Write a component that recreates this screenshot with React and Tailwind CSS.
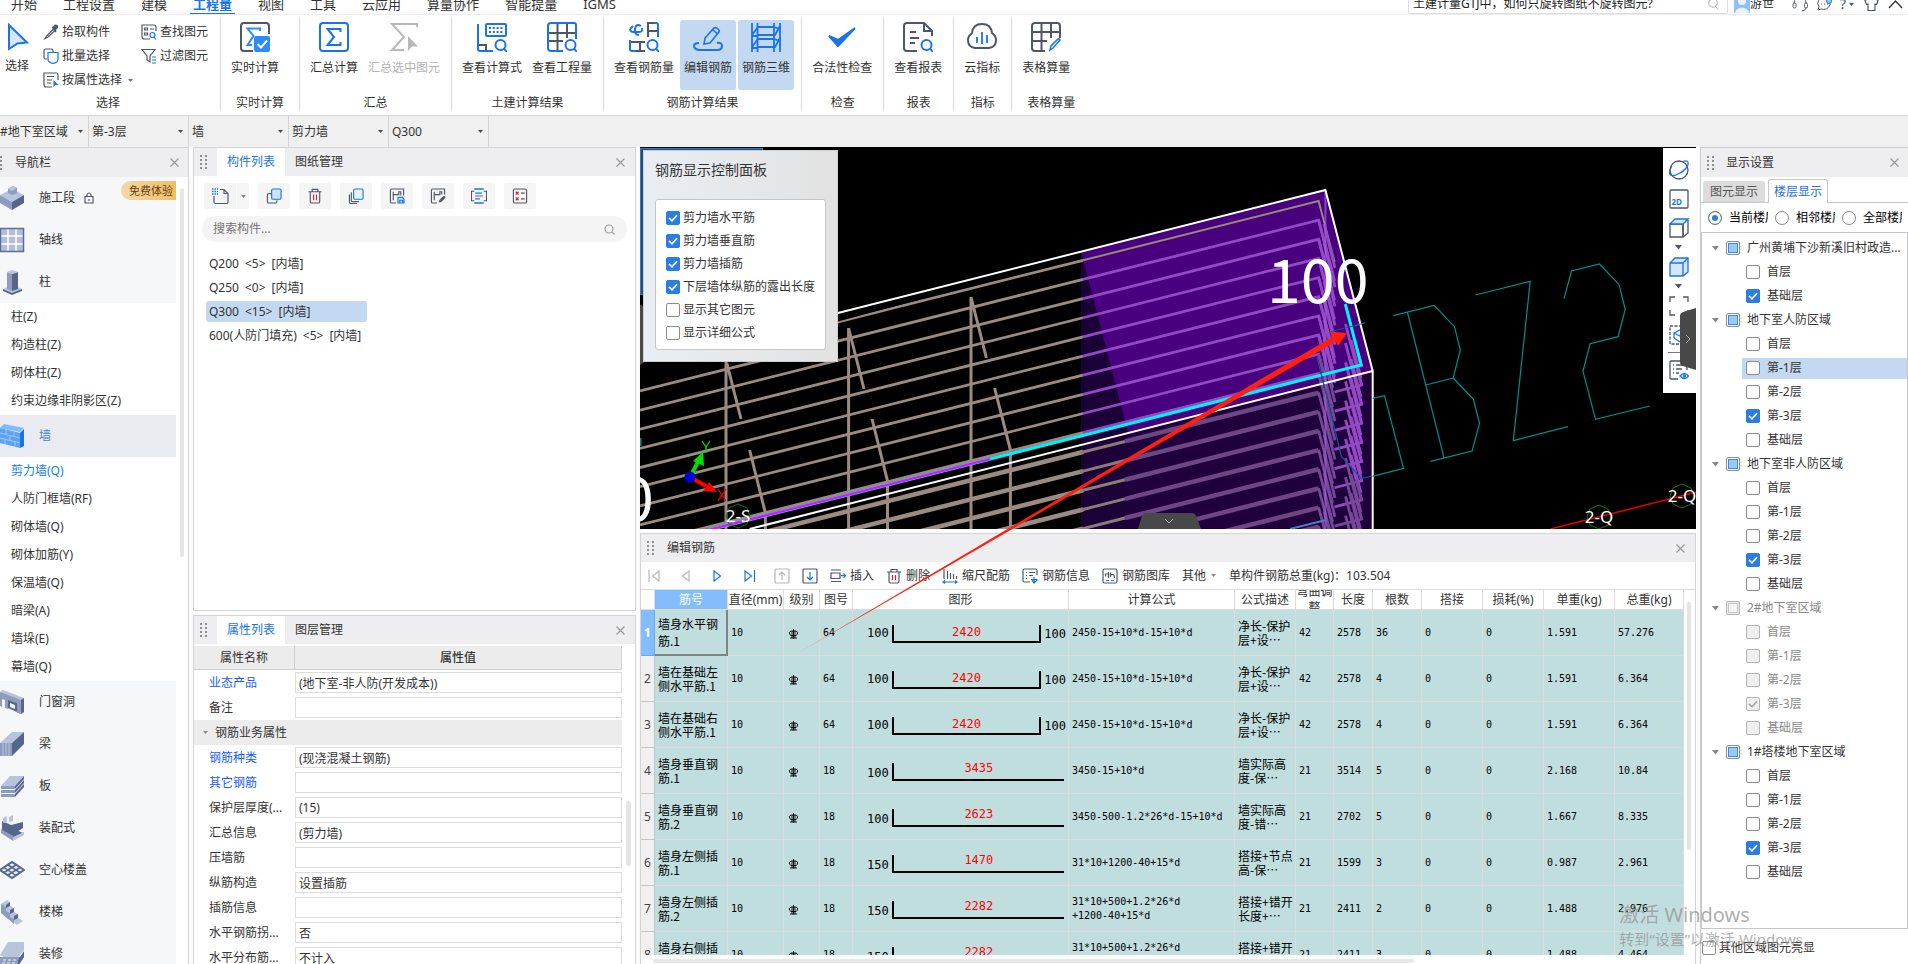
import React from "react";

const INK = "#4f5668";
const BLUE = "#1a73e8";

/* ---------- small shared pieces ---------- */

function Caret({ className = "" }) {
  return (
    <svg width="7" height="5" viewBox="0 0 7 5" className={"shrink-0 " + className} aria-hidden="true">
      <path d="M0 0h7L3.500 4.500z" fill="currentColor" />
    </svg>
  );
}

function Grip() {
  return (
    <svg width="7" height="14" viewBox="0 0 7 14" className="shrink-0" aria-hidden="true">
      {[0, 4, 8, 12].map((y) => (
        <g key={y} fill="#8f8f8f">
          <rect x="0" y={y} width="2" height="2" />
          <rect x="5" y={y} width="2" height="2" />
        </g>
      ))}
    </svg>
  );
}

function CloseButton({ label }) {
  return (
    <button type="button" aria-label={label} className="grid size-4 shrink-0 place-items-center text-[#9a9a9a]">
      <svg width="9" height="9" viewBox="0 0 9 9" aria-hidden="true">
        <path d="M.5.5l8 8M8.500.5l-8 8" stroke="currentColor" strokeWidth="1.200" />
      </svg>
    </button>
  );
}

function Check({ label, checked, partial, disabled, className = "", gap = "gap-[3px]" }) {
  const box = disabled
    ? "border-[#b4b4b4] bg-[#efefef]"
    : checked
      ? "border-[#2b7de1] bg-[#2b7de1]"
      : "border-[#8c8c8c] bg-white";
  return (
    <label className={"flex min-w-0 items-center " + gap + " " + className}>
      <span className="grid shrink-0">
        <input
          type="checkbox"
          defaultChecked={checked}
          disabled={disabled}
          className={"col-start-1 row-start-1 size-[14px] appearance-none rounded-[2px] border " + box}
        />
        {checked && (
          <svg width="14" height="14" viewBox="0 0 14 14" className="pointer-events-none col-start-1 row-start-1" aria-hidden="true">
            <path d="M3 6.800l3 3 5-5.600" fill="none" stroke={disabled ? "#a8a8a8" : "#fff"} strokeWidth="1.700" />
          </svg>
        )}
        {partial && (
          <span
            className={
              "pointer-events-none col-start-1 row-start-1 m-[2px] size-[10px] border " +
              (disabled ? "border-[#c4c4c4] bg-[#f4f4f4]" : "border-[#2b8cf5] bg-[#9cc9fb]")
            }
          />
        )}
      </span>
      <span className="truncate">{label}</span>
    </label>
  );
}

/* ---------- top menu ---------- */

const MENU = ["开始", "工程设置", "建模", "工程量", "视图", "工具", "云应用", "算量协作", "智能提量", "IGMS"];

function TopBar() {
  return (
    <header className="h-[15px] shrink-0 overflow-hidden border-b border-[#ececec] bg-white">
      <div className="-mt-[7px] flex h-[22px] items-center justify-between">
        <nav className="flex pl-px text-[13px] leading-[22px]">
          {MENU.map((m) => (
            <a key={m} href="#" className="relative mr-[6px] px-[10px] whitespace-nowrap">
              {m === "工程量" ? (
                <>
                  <span className="font-bold text-[#1a73e8]">{m}</span>
                  <span className="absolute inset-x-[7px] bottom-0 h-[2px] bg-[#1a73e8]" />
                </>
              ) : (
                m
              )}
            </a>
          ))}
        </nav>
        <div className="flex items-center pr-[5px] text-[#4f5668]">
          <label className="mr-[6px] flex h-5 w-[320px] items-center rounded-[2px] border border-[#dedede] px-1">
            <input
              aria-label="搜索帮助"
              defaultValue="土建计量GTJ中，如何只旋转图纸不旋转图元?"
              className="min-w-0 flex-1 text-[12px] text-[#222] outline-none"
            />
            <svg width="11" height="12" viewBox="0 0 11 12" className="mr-1" aria-hidden="true">
              <circle cx="5" cy="5" r="4.200" fill="none" stroke="#aaa" />
              <path d="M7.500 8.500l2.500 3" stroke="#aaa" />
            </svg>
          </label>
          <svg width="16" height="18" viewBox="0 0 16 18" aria-hidden="true">
            <rect width="16" height="18" fill="#8fc1f7" />
            <circle cx="8" cy="6" r="4" fill="#eaf4ff" />
            <path d="M1 18c1-7 13-7 14 0z" fill="#eaf4ff" />
          </svg>
          <span className="mr-[18px] text-[12px] text-[#222]">游世</span>
          <svg width="17" height="16" viewBox="0 0 17 16" fill="none" stroke="currentColor" aria-hidden="true">
            <path d="M2 7a6 6 0 0 1 12 0" />
            <rect x="1" y="7" width="3" height="5" rx="1.500" />
            <rect x="12.500" y="7" width="3" height="5" rx="1.500" />
            <path d="M14 12q-1 3-4 3" />
          </svg>
          <svg width="16" height="16" viewBox="0 0 16 16" className="ml-[7px]" fill="none" stroke="currentColor" aria-hidden="true">
            <path d="M8 1.500a6.500 6 0 1 1-3 11.500l-3 1 1-3A6 6 0 0 1 8 1.500z" />
            <path d="M5 8h1M8 8h1M11 8h1" />
            <circle cx="13" cy="5" r="2.500" fill="#9cc9fb" stroke="#1a73e8" />
          </svg>
          <span className="ml-2 text-[14px]">?</span>
          <Caret className="ml-[2px] scale-75" />
          <svg width="15" height="16" viewBox="0 0 15 16" className="ml-[9px]" fill="none" stroke="currentColor" strokeWidth="1.200" aria-hidden="true">
            <path d="M5 2L1 4.500l1.500 4 1.500-.5v6.500h7V8l1.500.5 1.500-4L10 2q-2.500 2.500-5 0z" />
          </svg>
          <svg width="15" height="10" viewBox="0 0 15 10" className="ml-[9px]" fill="none" stroke="#333" strokeWidth="1.300" aria-hidden="true">
            <path d="M1 9l6.500-7L14 9" />
          </svg>
        </div>
      </div>
    </header>
  );
}

/* ---------- ribbon ---------- */

function Ico({ children, size = 30 }) {
  return (
    <svg width={size} height={size} viewBox="0 0 30 30" fill="none" strokeWidth="2" stroke={INK} className="shrink-0" aria-hidden="true">
      {children}
    </svg>
  );
}

const magnifier = (
  <g stroke={BLUE}>
    <ellipse cx="23.500" cy="23" rx="5" ry="5" fill="#fff" />
    <path d="M27 26.500l3 3.500" />
  </g>
);

const ICONS = {
  realtime: (
    <Ico>
      <path d="M29 12V4q0-3-3-3H4Q1 1 1 4v22q0 3 3 3h9" />
      <path d="M20 9V6.500H7.500L13.500 14l-6 9H12" stroke="#2e8bff" />
      <rect x="14" y="14" width="16" height="16" rx="2" fill="#2e8bff" stroke="none" />
      <path d="M17.500 22l3.500 3.500 6-7" stroke="#fff" />
    </Ico>
  ),
  sigma: (
    <Ico>
      <rect x="1" y="1" width="28" height="28" rx="3" stroke={BLUE} />
      <path d="M21.500 10V7H8.500l6.500 8-6.500 8h13v-3" stroke={BLUE} />
    </Ico>
  ),
  sigmaPick: (
    <Ico>
      <path d="M28 5V2H3l12 13L3 28h12" stroke="#b9b9b9" />
      <path d="M19 14v15l4-4.500h6z" fill="#b9b9b9" stroke="none" />
    </Ico>
  ),
  viewFormula: (
    <Ico>
      <rect x="9" y="2" width="20" height="12" rx="1" stroke={BLUE} />
      <path d="M12 6h15M12 10h15" stroke={BLUE} strokeDasharray="2 1.800" />
      <path d="M1 2v25q0 2 2 2h13" stroke={BLUE} />
      <path d="M2 23h7v6" />
      {magnifier}
    </Ico>
  ),
  viewQty: (
    <Ico>
      <path d="M2 11h26M2 19h14M10.500 2v26M20 2v14" />
      <path d="M16 29H4q-3 0-3-3V4q0-3 3-3h23q2 0 2 2v14" stroke={BLUE} />
      {magnifier}
    </Ico>
  ),
  viewRebar: (
    <Ico>
      <path d="M12 4Q7 1 6 7t4 6M1 7q0 3 4 3h5q4 0 3-4M1 7l3-3" stroke={BLUE} />
      <path d="M19 15V1h7M19 9h9" />
      <path d="M25 1h2q2 0 2 2v12" stroke={BLUE} />
      <path d="M1 18v9q0 2 2 2h4" stroke={BLUE} />
      <path d="M2 20h14M11 20v9M7 29h9" />
      {magnifier}
    </Ico>
  ),
  editRebar: (
    <Ico>
      <path d="M6 21q-5 0-5 3t5 4h18q5 0 5-4t-5-3" stroke={BLUE} />
      <path d="M11 22l1-6L21 6q2-1 4 1t1 3L17 21zM20 8l4 3.500" stroke={BLUE} strokeWidth="1.600" />
    </Ico>
  ),
  rebar3d: (
    <Ico>
      <g stroke={BLUE} strokeWidth="1.800">
        <path d="M1 1v29M6.500 1v29M23 1v29M29 1v29" />
        <path d="M1 13L7 5h16M6.500 13H24l5-9M1 25l6-8h17M6.500 25H24l5-9M23 5l6 2M23 17l6 2M1 14h5M1 26h5" />
      </g>
    </Ico>
  ),
  tick: (
    <Ico>
      <path d="M2 14l9 10L28 6 11 18z" fill={BLUE} stroke={BLUE} />
    </Ico>
  ),
  report: (
    <Ico>
      <path d="M14 29H4q-3 0-3-3V4q0-3 3-3h17l8 8v5M21 1v8h8" />
      <path d="M7 10h6M7 16h9M7 21h5" />
      {magnifier}
    </Ico>
  ),
  cloud: (
    <Ico>
      <path d="M8 26q-7-1-7-8 0-4 4-7 1-9 10-9t10 9q4 3 4 7 0 7-7 8z" />
      <path d="M10 15v6M15 10v12M20 13v8" stroke={BLUE} strokeWidth="1.800" />
    </Ico>
  ),
  tableQty: (
    <Ico>
      <path d="M14 29H4q-3 0-3-3V4q0-3 3-3h22q3 0 3 3v12M1 10h28M1 19h15M10.500 1v27M20 1v15" />
      <path d="M19 28l1-4 7-7q1.500-.5 2 1l-7 8z" stroke={BLUE} strokeWidth="1.500" fill="#fff" />
    </Ico>
  ),
};

const GROUPS = [
  { name: "实时计算", wide: true, items: [["实时计算", "realtime"]] },
  { name: "汇总", items: [["汇总计算", "sigma"], ["汇总选中图元", "sigmaPick", "off"]] },
  { name: "土建计算结果", items: [["查看计算式", "viewFormula"], ["查看工程量", "viewQty"]] },
  { name: "钢筋计算结果", items: [["查看钢筋量", "viewRebar"], ["编辑钢筋", "editRebar", "on"], ["钢筋三维", "rebar3d", "on"]] },
  { name: "检查", items: [["合法性检查", "tick"]] },
  { name: "报表", items: [["查看报表", "report"]] },
  { name: "指标", items: [["云指标", "cloud"]] },
  { name: "表格算量", wide: true, items: [["表格算量", "tableQty"]] },
];

function SmallTool({ label, caret, children }) {
  return (
    <button type="button" className="flex h-6 shrink-0 items-center gap-[3px] whitespace-nowrap">
      <svg width="16" height="16" viewBox="0 0 16 16" fill="none" stroke={INK} strokeWidth="1.200" aria-hidden="true">
        {children}
      </svg>
      <span>{label}</span>
      {caret && <Caret className="ml-[2px] scale-75 text-[#777]" />}
    </button>
  );
}

function Ribbon() {
  return (
    <div className="flex h-[101px] shrink-0 border-b border-[#d4d4d4] bg-white">
      <section className="flex w-[220px] flex-col pt-[5px]">
        <div className="flex h-[70px] shrink-0">
          <button type="button" className="flex w-[34px] shrink-0 flex-col items-center pt-[3px]">
            <svg width="22" height="28" viewBox="0 0 22 28" className="mb-[7px] ml-[2px] shrink-0" aria-hidden="true">
              <path d="M2 2l18 17.500-9.500 1L2 26z" fill="#d5e6fb" stroke={BLUE} strokeWidth="2" />
            </svg>
            选择
          </button>
          <div className="flex w-[107px] flex-col pl-[9px]">
            <SmallTool label="拾取构件">
              <path d="M9 3l4 4M10 4q2-4 4-2.500t-2 4.500l1 2-3-3z" fill={INK} />
              <path d="M10 5.500L3.500 12l-1.500 2.500L5 13l6.500-6" />
            </SmallTool>
            <SmallTool label="批量选择">
              <path d="M4 11H2.500Q1 11 1 9.500v-7Q1 1 2.500 1h6Q10 1 10 2.500V4" />
              <path d="M5 4.500h10v7q0 3-5 4-5-1-5-4z" stroke={BLUE} />
            </SmallTool>
            <SmallTool label="按属性选择" caret>
              <path d="M9 15H3q-2 0-2-2V1h12q2 0 2 2v5M4 4.500h7M4 8h5M4 11h4" />
              <path d="M10.500 8v7l2-2h3z" fill={BLUE} stroke="none" />
            </SmallTool>
          </div>
          <div className="flex flex-col">
            <SmallTool label="查找图元">
              <path d="M9 15H3q-2 0-2-2V1h12q2 0 2 2v4M3.500 4h3v2h-3zM9 5h4M3.500 9h3v2h-3z" />
              <circle cx="11.500" cy="11" r="2.500" stroke={BLUE} />
              <path d="M13 13l2 2.500" stroke={BLUE} />
            </SmallTool>
            <SmallTool label="过滤图元">
              <path d="M1 1.500h13L9 8v6l-3-2V8z" />
              <path d="M11 9h4M11 12h4M11 15h4" stroke={BLUE} />
            </SmallTool>
          </div>
        </div>
        <h2 className="pr-1 text-center leading-[26px]">选择</h2>
      </section>
      {GROUPS.map((g) => (
        <React.Fragment key={g.name}>
          <div className="mt-[2px] h-[94px] w-px bg-[#d9d9d9]" />
          <section className="flex flex-col pt-[5px]">
            <div className={"flex h-[70px] shrink-0 gap-[2px] pl-[6px] " + (g.wide ? "pr-4" : "pr-[7px]")}>
              {g.items.map(([label, icon, state]) => (
                <button
                  key={label}
                  type="button"
                  disabled={state === "off"}
                  className={
                    "flex flex-col items-center gap-2 rounded-[3px] px-1 pt-[2px] leading-4 whitespace-nowrap " +
                    (state === "on" ? "bg-[#c2d9f1]" : state === "off" ? "text-[#b3b3b3]" : "")
                  }
                >
                  {ICONS[icon]}
                  {label}
                </button>
              ))}
            </div>
            <h2 className="text-center leading-[26px]">{g.name}</h2>
          </section>
        </React.Fragment>
      ))}
    </div>
  );
}

const SELECTS = [
  ["区域", "#地下室区域", "w-[89px]", "pl-0"],
  ["楼层", "第-3层", "w-[100px]", "pl-[3px]"],
  ["构件类型", "墙", "w-[100px]", "pl-[3px]"],
  ["构件子类型", "剪力墙", "w-[100px]", "pl-[3px]"],
  ["构件", "Q300", "w-[100px]", "pl-[3px]"],
];

function SelectBar() {
  return (
    <div className="flex h-[31px] shrink-0 bg-[#f0f0f0]">
      {SELECTS.map(([name, value, w, pad]) => (
        <div key={name} className={"grid items-center border-r border-[#d4d4d4] " + w}>
          <select aria-label={name} className={"col-start-1 row-start-1 h-full w-full appearance-none bg-transparent " + pad}>
            <option>{value}</option>
          </select>
          <Caret className="pointer-events-none col-start-1 row-start-1 mr-[4px] scale-75 justify-self-end text-[#4a4a4a]" />
        </div>
      ))}
    </div>
  );
}

/* ---------- navigation ---------- */

const L = "#b9c4dc";
const M = "#8e9cbe";
const D = "#55658c";

const NAV_ICONS = {
  施工段: (
    <>
      <path d="M0 10l12-6 12 6-12 7z" fill={L} />
      <path d="M0 10l12 7v8L0 18z" fill={M} />
      <path d="M24 10l-12 7v8l12-7z" fill={D} />
      <path d="M8 4l5-3 4 2v5l-5 2-4-2z" fill={M} />
      <path d="M8 4l5-3 4 2-5 3z" fill={L} />
    </>
  ),
  轴线: (
    <>
      <path d="M0 1h24v24H0z" fill="#b4bfd6" />
      <path d="M8 1v24M16 1v24M0 9h24M0 17h24" stroke="#fff" strokeWidth="1.500" />
      <path d="M.5 1.500h23v23H.5z" fill="none" stroke="#5b6c95" strokeWidth="1.500" />
    </>
  ),
  柱: (
    <>
      <path d="M3 20l9-4 10 4-10 5z" fill={L} />
      <path d="M3 20l9 4v2l-9-4zM22 20l-10 4v2l10-4z" fill={D} />
      <path d="M7 3l5 2v17l-5-2z" fill={M} />
      <path d="M18 3l-6 2v17l6-2z" fill={D} />
      <path d="M7 3l5-2 6 2-6 2z" fill={L} />
    </>
  ),
  墙: (
    <>
      <path d="M0 5l4-4 20 4-4 4z" fill="#7fbcff" />
      <path d="M0 5l20 5v15L0 20z" fill="#5aa2f7" />
      <path d="M24 6l-4 4v15l4-2z" fill="#1a73e8" />
      <path d="M0 10l20 5M0 15l20 5M6 6.500v5M14 8.500v5M10 12.500v5M5 16.500v5M15 19v4" stroke="#9fcaff" />
    </>
  ),
  门窗洞: (
    <>
      <path d="M0 3l3-2 21 8v13l-3 2z" fill={L} />
      <path d="M0 3l21 8v14l-4-1V14l-9-3v9l-3-1v-8l-3-1v8l-2-1z" fill={M} />
      <path d="M8 11l9 3v9l-9-4z" fill={D} />
      <path d="M10 14l5 2v4l-5-2z" fill="#eef1f7" />
      <path d="M24 9l-3 2v14l3-2z" fill={D} />
    </>
  ),
  梁: (
    <>
      <path d="M0 12L12 1h12L12 12z" fill={L} />
      <path d="M0 12h12v13H0z" fill={M} />
      <path d="M12 12L24 1v12L12 25z" fill={D} />
      <path d="M3 12v13M6 12v13M9 12v13" stroke={L} />
    </>
  ),
  板: (
    <>
      <path d="M1 13L10 3h14l-9 10z" fill={L} />
      <path d="M1 13h14v3H1zM1 17h14v3H1zM1 21h14v3H1z" fill={M} />
      <path d="M15 13l9-10v3l-9 10zM15 17l9-10v3l-9 10zM15 21l9-10v3l-9 10z" fill={D} />
    </>
  ),
  装配式: (
    <>
      <path d="M1 14l6-3 16 7-9 6z" fill={D} />
      <path d="M2 6l9 4 12-3v6l-9 6L2 13z" fill={D} />
      <path d="M1 14l12 7v5L1 18z" fill={M} />
      <path d="M24 17l-11 5v4l11-6z" fill={L} />
      <path d="M3 3l4-2v6L3 8zM9 2l4-2v6L9 7z" fill={L} />
    </>
  ),
  空心楼盖: (
    <>
      <path d="M0 13L12 5l12 8-12 8z" fill="#e6eaf3" stroke={D} strokeWidth="2" />
      <path d="M4 10.500l12 8M8 8l12 7.500M4 15.500L16 8M8 18l12-7.500" stroke={D} strokeWidth="1.500" />
    </>
  ),
  楼梯: (
    <>
      <path d="M1 5l6-4 3 2v4l4 2v4l4 2v4l5 3-6 4L1 14z" fill={L} />
      <path d="M6 6l4-3v4l-4 2zM10 11l4-2v4l-4 2zM14 17l4-2v4l-4 2z" fill={D} />
      <path d="M1 5l5 3v4l4 2v4l4 2v5L1 14z" fill={M} />
    </>
  ),
  装修: (
    <>
      <path d="M0 14L8 1h16v8L14 22z" fill={L} />
      <path d="M0 16h24l-6 9H0z" fill={M} />
      <path d="M24 10v6l-6 9v-6z" fill={D} />
      <path d="M3 19h14M2 22h14" stroke="#eef1f7" strokeDasharray="3 2" />
    </>
  ),
};

const NAV = [
  { name: "施工段", locked: true },
  { name: "轴线" },
  { name: "柱", children: ["柱(Z)", "构造柱(Z)", "砌体柱(Z)", "约束边缘非阴影区(Z)"] },
  { name: "墙", active: true, children: ["剪力墙(Q)", "人防门框墙(RF)", "砌体墙(Q)", "砌体加筋(Y)", "保温墙(Q)", "暗梁(A)", "墙垛(E)", "幕墙(Q)"] },
  { name: "门窗洞" },
  { name: "梁" },
  { name: "板" },
  { name: "装配式" },
  { name: "空心楼盖" },
  { name: "楼梯" },
  { name: "装修" },
];

function NavPanel() {
  return (
    <aside className="flex w-[189px] shrink-0 flex-col overflow-hidden border-t border-r border-[#d4d4d4] bg-white">
      <div className="flex h-[29px] shrink-0 items-center bg-[#eeeef0] pr-[6px]">
        <div className="w-[15px] overflow-hidden">
          <div className="-ml-[5px]">
            <Grip />
          </div>
        </div>
        <h2 className="flex-1">导航栏</h2>
        <CloseButton label="关闭导航栏" />
      </div>
      <div className="flex min-h-0 flex-1">
        <ul className="w-[176px]">
          {NAV.map((n) => (
            <li key={n.name}>
              <a
                href="#"
                className={"relative flex h-[42px] items-center " + (n.active ? "bg-[#e9ebf0] text-[#3f7fdc]" : "bg-[#f6f7f9]")}
              >
                <svg width="25" height="26" viewBox="0 0 25 26" className="mr-[14px] shrink-0" aria-hidden="true">
                  {NAV_ICONS[n.name]}
                </svg>
                {n.name}
                {n.locked && (
                  <>
                    <svg width="10" height="12" viewBox="0 0 10 12" className="ml-[9px]" fill="none" stroke={INK} strokeWidth="1.200" aria-hidden="true">
                      <path d="M1 4.500h8v6.500H1zM3 4V2.500q2-3 4 0V4M5 7v2" />
                    </svg>
                    <span className="absolute top-[4px] right-0 h-[19px] rounded-l-full bg-linear-to-r from-[#f4d8a6] to-[#eec064] pr-[3px] pl-2 text-[11px] leading-[19px] text-[#6b3d0c]">
                      免费体验
                    </span>
                  </>
                )}
              </a>
              {n.children && (
                <ul>
                  {n.children.map((c) => (
                    <li key={c} className="h-7">
                      <a href="#" className={"block pl-[11px] leading-7 " + (c === "剪力墙(Q)" ? "text-[#1081f0]" : "")}>
                        {c}
                      </a>
                    </li>
                  ))}
                </ul>
              )}
            </li>
          ))}
        </ul>
        <div className="mt-[11px] ml-1 h-[369px] w-1 rounded-full bg-[#e6e6e6]" />
      </div>
    </aside>
  );
}

/* ---------- component list ---------- */

function PanelTabs({ tabs, close }) {
  return (
    <div className="flex h-[28px] shrink-0 items-center bg-[#eeeef0] pr-[7px] pl-[6px]">
      <Grip />
      <div className="ml-[10px] flex h-full flex-1" role="tablist">
        {tabs.map((t, i) => (
          <button
            key={t}
            type="button"
            role="tab"
            aria-selected={i === 0}
            className={"h-full w-[68px] " + (i === 0 ? "bg-white text-[#1a73e8]" : "")}
          >
            {t}
          </button>
        ))}
      </div>
      <CloseButton label={close} />
    </div>
  );
}

const LIST_TOOLS = {
  复制: (
    <>
      <path d="M5 6H2.500Q1 6 1 7.500v7Q1 16 2.500 16h7q1.500 0 1.500-1.500V13" />
      <rect x="5.500" y="1" width="10" height="11" rx="1.500" fill="#cfe3fb" stroke={BLUE} />
    </>
  ),
  删除: (
    <>
      <path d="M1 4h14M5 4V1.500h6V4M3 4v10.500Q3 16 4.500 16h7q1.500 0 1.500-1.500V4" />
      <path d="M6.500 7v6M9.500 7v6" stroke="#e02020" />
    </>
  ),
  层间复制: (
    <>
      <path d="M1 7v8q0 1.500 1.500 1.500H9M3 4.500V13q0 1.500 1.500 1.500H11" />
      <rect x="5.500" y="1" width="10" height="11" rx="1.500" fill="#e8f2fd" stroke={BLUE} />
    </>
  ),
  存档: (
    <>
      <path d="M7 16H2.500Q1 16 1 14.500v-12Q1 1 2.500 1H15v7M4 4v9M4 7h6V4h2v4" />
      <path d="M9 10h5l1.500 2v4H9zM11 16v-3h3v3" fill="#cfe3fb" stroke={BLUE} />
    </>
  ),
  提取: (
    <>
      <path d="M7 16H2.500Q1 16 1 14.500v-12Q1 1 2.500 1H15v6M4 4v9M4 7h6V4h2v3" />
      <path d="M9 15l1-2.500 3-3 2-1 .5 1.500-1 1.500-3 3z" fill={INK} strokeWidth=".6" />
    </>
  ),
  排序: (
    <>
      <path d="M3 1h10M3 16h10" stroke={BLUE} strokeWidth="1.600" />
      <path d="M3 3.500H0v10h3M13 3.500h3v10h-3" />
      <path d="M4 5.500h7M4 8.500h8M4 11.500h5" stroke={BLUE} />
    </>
  ),
  检查: (
    <>
      <rect x="1" y="1" width="14" height="15" rx="1.500" />
      <path d="M3.500 4l3 3M6.500 4l-3 3M3.500 10l3 3M6.500 10l-3 3" stroke="#e02020" />
      <path d="M9 5.500h4M9 11.500h4" />
    </>
  ),
};

const COMPONENTS = ["Q200 <5> [内墙]", "Q250 <0> [内墙]", "Q300 <15> [内墙]", "600(人防门填充) <5> [内墙]"];

function ListPanel() {
  return (
    <section className="flex h-[464px] shrink-0 flex-col border border-[#d4d4d4] bg-white">
      <PanelTabs tabs={["构件列表", "图纸管理"]} close="关闭构件列表" />
      <div className="mt-[7px] flex gap-[9px] pl-[10px]">
        <div className="flex gap-px">
          <button type="button" aria-label="新建" className="grid h-[26px] w-8 place-items-center rounded-l-[3px] bg-[#f5f5f5]">
            <svg width="17" height="17" viewBox="0 0 17 17" fill="none" stroke={INK} strokeWidth="1.200" aria-hidden="true">
              <path d="M8 1.500h4l4 4V14q0 1.500-1.500 1.500h-11Q2 15.500 2 14V8M12 1.500v4h4" />
              <path d="M0 1h6M0 3.500h6M0 6h6" stroke={BLUE} strokeWidth="1.600" strokeDasharray="1.500 1" />
            </svg>
          </button>
          <button type="button" aria-label="新建选项" className="grid w-3 place-items-center rounded-r-[3px] bg-[#f5f5f5] text-[#888]">
            <Caret className="scale-75" />
          </button>
        </div>
        {Object.entries(LIST_TOOLS).map(([k, icon]) => (
          <button key={k} type="button" aria-label={k} className="grid h-[26px] w-8 place-items-center rounded-[3px] bg-[#f5f5f5]">
            <svg width="16" height="16" viewBox="0 0 16 17" fill="none" stroke={INK} strokeWidth="1.200" aria-hidden="true">
              {icon}
            </svg>
          </button>
        ))}
      </div>
      <label className="mx-2 mt-[7px] flex h-[26px] items-center rounded-full bg-[#f4f4f4] pr-3 pl-[11px]">
        <input aria-label="搜索构件" placeholder="搜索构件..." className="min-w-0 flex-1 placeholder-[#757575] outline-none" />
        <svg width="11" height="11" viewBox="0 0 11 11" fill="none" stroke="#a0a0a0" strokeWidth="1.200" aria-hidden="true">
          <circle cx="5" cy="5" r="4" />
          <path d="M8 8l2.500 2.500" />
        </svg>
      </label>
      <ul className="mt-[11px] flex flex-col items-start gap-[3px] pl-3">
        {COMPONENTS.map((c) => (
          <li key={c}>
            <button
              type="button"
              className={
                "flex h-[21px] w-[161px] items-center gap-[6px] rounded-[3px] pl-[3px] whitespace-nowrap " +
                (c.startsWith("Q300") ? "bg-[#c2d9f1]" : "")
              }
            >
              {c.split(" ").map((part) => (
                <span key={part}>{part}</span>
              ))}
            </button>
          </li>
        ))}
      </ul>
    </section>
  );
}

/* ---------- properties ---------- */

const PROPS = [
  ["业态产品", "(地下室-非人防(开发成本))", true],
  ["备注", ""],
  null,
  ["钢筋种类", "(现浇混凝土钢筋)", true],
  ["其它钢筋", "", true],
  ["保护层厚度(...", "(15)"],
  ["汇总信息", "(剪力墙)"],
  ["压墙筋", ""],
  ["纵筋构造", "设置插筋"],
  ["插筋信息", ""],
  ["水平钢筋拐...", "否"],
  ["水平分布筋...", "不计入"],
];

function PropertyPanel() {
  return (
    <section className="mt-1 flex min-h-0 flex-1 flex-col overflow-hidden border border-b-0 border-[#d4d4d4] bg-white">
      <PanelTabs tabs={["属性列表", "图层管理"]} close="关闭属性列表" />
      <div className="mt-[2px] flex min-h-0 flex-1">
        <div className="min-w-0 flex-1">
          <div className="flex h-[24px] border-b border-[#cfcfcf] bg-[#ececec] text-center leading-[24px]">
            <div className="w-[101px] border-r border-[#cfcfcf]">属性名称</div>
            <div className="flex-1 border-r border-[#cfcfcf] font-medium">属性值</div>
          </div>
          {PROPS.map((p) =>
            p ? (
              <label key={p[0]} className="flex h-[25px] items-center">
                <span className={"w-[101px] shrink-0 pl-[15px] whitespace-nowrap " + (p[2] ? "text-[#1a5cff]" : "")}>{p[0]}</span>
                <input defaultValue={p[1]} className="h-[21px] min-w-0 flex-1 border border-[#dcdcdc] px-[3px] outline-none" />
              </label>
            ) : (
              <div key="group" className="flex h-[25px] items-center bg-[#ececec] pl-[8px]">
                <Caret className="mr-[6px] scale-75 text-[#888]" />
                钢筋业务属性
              </div>
            ),
          )}
        </div>
        <div className="mt-[155px] mr-[4px] ml-[4px] h-[65px] w-[5px] rounded-full bg-[#e4e4e4]" />
      </div>
    </section>
  );
}

/* ---------- 3D view ---------- */

const SLOPE = 0.2517;
const PITCH = 19.15;
const range = (n) => Array.from({ length: n }, (_, i) => i);
const barY = (x, y678) => y678 + (678.6 - x) * SLOPE;

const POSTS =
  "M86 190V382M208.600 181V382M331 150V382M86.800 216L101 272M208.600 181L224 242M331 150L346.400 211M109.600 303L125.400 366V382M232 272L247.500 334V382M354.600 241L370.400 303V382";

function AxisLabel({ x, y, text }) {
  return (
    <g>
      <polygon
        points={`${x},${y - 12} ${x + 9},${y - 8} ${x + 12},${y} ${x + 9},${y + 8} ${x},${y + 12} ${x - 9},${y + 8} ${x - 12},${y} ${x - 9},${y - 8}`}
        fill="none"
        stroke="#0a7a0a"
      />
      <text x={x} y={y + 6} textAnchor="middle" fontSize="17" fill="#fff">
        {text}
      </text>
    </g>
  );
}

function Scene() {
  return (
    <svg className="absolute inset-0 h-full w-full" viewBox="0 0 1056 382" preserveAspectRatio="xMinYMin slice" fill="none" role="img" aria-label="钢筋三维模型">
      <defs>
        <clipPath id="front">
          <path d="M105 384L732.700 224V382H105z" />
        </clipPath>
        <clipPath id="top">
          <path d="M0 228L685 43l47 181L68 382H0z" />
        </clipPath>
        <clipPath id="end">
          <path d="M441 104.700L685.400 43l47.300 181v158H441z" />
        </clipPath>
      </defs>
      <path d="M441 104.700V382h291.700V224L488 286z" fill="#1c0038" />
      <path d="M488 286V382h244.700V224z" fill="#1f003d" />
      <path d="M441 104.700L685.400 43l47.300 181L488 286z" fill="#48007f" />

      <g clipPath="url(#top)" strokeWidth="2.800">
        {range(10).map((k) => {
          const y = 54 + PITCH * k;
          return (
            <g key={k}>
              <path d={`M0 ${barY(0, y)}L443 ${barY(443, y)}`} stroke="#9b8b83" />
              <path d={`M443 ${barY(443, y)}L678.600 ${y}l16 61`} stroke={k === 0 ? "#988877" : "#9349c4"} strokeWidth={k === 0 ? 2 : 2.800} />
            </g>
          );
        })}
      </g>
      <g clipPath="url(#front)">
        {range(15).map((k) => {
          const y = 245.700 + PITCH * k;
          return (
            <g key={k}>
              <path d={`M100 ${barY(100, y)}L443 ${barY(443, y)}`} stroke="#9b8b83" strokeWidth="4.500" />
              <path d={`M440 ${barY(440, y)}L485 ${barY(485, y)}`} stroke="#8d7b78" strokeWidth="3" />
              <path d={`M485 ${barY(485, y)}L678.600 ${y}`} stroke="#6e4684" strokeWidth="4.500" />
            </g>
          );
        })}
      </g>
      <g clipPath="url(#end)" strokeWidth="2.800">
        {range(18).map((k) => {
          const y = 73 + PITCH * k;
          const c = y < 205 ? "#9349c4" : "#764796";
          return (
            <g key={k} stroke={c}>
              <path d={`M678.600 ${y}l14 53M684 ${y + 4}l11 44`} />
              {k < 12 && <path d={`M705.500 ${y + 104}l16 61-27 7M711 ${y + 120}l10 38M716 ${y + 125}l6 22`} />}
            </g>
          );
        })}
        <path d="M685.400 43V382" stroke="#a35fe0" strokeWidth="2" opacity=".7" />
      </g>

      <path d={POSTS} stroke="#9b8b83" strokeWidth="3" />

      <path d="M190 168L685.400 43l47.300 181V382M109.600 382L732.700 224" stroke="#fff" strokeWidth="2" />
      <path d="M68 383L350 312" stroke="#27c7e8" strokeWidth="3.500" />
      <path d="M68 383L350 312" stroke="#ff00ff" strokeWidth="2" />
      <path d="M350 312L721.200 218 705.300 157" stroke="#00f2ff" strokeWidth="3" />
      <path d="M650 382l36-9" stroke="#4a7fc0" strokeWidth="2" />

      <g stroke="#009090" strokeWidth="1.200">
        <path d="M753.300 168.700L794.200 158.300l20.300 21.400 5.800 23.300-7.100 28-27.400 7M813.200 231l20.200 21.300 6.100 24-7.400 27.700-41.600 10.300M767.500 165.700L804 310.700" />
        <path d="M835.500 148l54.700-13.700-16.900 159.400 54.500-14" />
        <path d="M924 151.700l7.500-27.700 28-7 19.600 20.700 6.100 24.600-7.100 27.400-28 7-7.100 27.600 12.500 48 54.400-13.300" />
        <path d="M732.700 251.300l11.800-2.600 19 72.600-31 8M725 175.700l-10 3" />
        <path d="M732 329l-10.500 2.700-20-22L677 210M715 178.500l-26 6.500" stroke="#1b4f98" />
      </g>
      <path d="M0 291v8" stroke="#009090" strokeWidth="3" />

      <path d="M910.500 382L1056 345.300" stroke="#e60000" strokeWidth="1.500" />
      <AxisLabel x={959} y={370} text="2-Q" />
      <AxisLabel x={1042} y={349} text="2-Q" />
      <AxisLabel x={98} y={369} text="2-S" />

      <g className="font-['Noto_Sans_CJK_SC','Noto_Sans',sans-serif]" fill="#fff" fontSize="61">
        <text x="627" y="156">100</text>
        <text x="-20" y="374">0</text>
      </g>

      <path d="M50 330l10-19" stroke="#00e000" strokeWidth="4" />
      <path d="M63 305l1 14-11-5z" fill="#00e000" />
      <path d="M50 330l16 9" stroke="#ff0000" strokeWidth="4" />
      <path d="M77 345l-14-1 6-9z" fill="#ff0000" />
      <circle cx="50" cy="330" r="5.500" fill="#0000d8" />
      <path d="M62 294l4 6 4-6M66 300v6" stroke="#00e000" strokeWidth="1.300" />
      <path d="M78 342l8 12M86 342l-8 12" stroke="#ff0000" strokeWidth="1.300" />

      <path d="M0 158h1q14 8 14 30 0 22-15 30z" fill="#4a4a4a" />
      <path d="M498 382l4-13q1-3 4-3h46q3 0 4 3l5 13z" fill="#484848" />
      <path d="M525 372l4 4 4-4" stroke="#aaa" />
    </svg>
  );
}

const CUBE = (
  <>
    <path d="M1 6h13v13H1z" />
    <path d="M14 19l5-4V2" />
    <path d="M1 6l5-5h13l-5 5z" fill="#d5e6fb" stroke={BLUE} />
    <path d="M14 6v13" />
  </>
);

function ViewTools() {
  const svg = { width: 20, height: 20, viewBox: "0 0 20 20", fill: "none", stroke: INK, strokeWidth: 1.3, "aria-hidden": true };
  return (
    <div className="absolute top-px right-0 flex h-[245px] w-[33px] flex-col items-center bg-white pt-[12px] pr-[2px]">
      <button type="button" aria-label="动态观察" className="h-5">
        <svg {...svg}>
          <circle cx="10" cy="10" r="9" />
          <path d="M14 1.500Q20-.5 19 4.500 18 9 11 13T1.500 15Q-1 12 3 6" stroke={BLUE} />
        </svg>
      </button>
      <button type="button" aria-label="二维" className="mt-[9px] h-5">
        <svg {...svg}>
          <rect x="1" y="1" width="18" height="18" rx="1" />
          <text x="2.500" y="16" fontSize="8" fontWeight="700" fill={BLUE} stroke="none">2D</text>
        </svg>
      </button>
      <button type="button" aria-label="视图方向" className="mt-[9px] h-5">
        <svg {...svg}>{CUBE}</svg>
      </button>
      <Caret className="mt-[7px] text-[#4f5668]" />
      <button type="button" aria-label="显示样式" className="mt-[7px] h-5">
        <svg {...svg} stroke={BLUE}>
          <path d="M1 6l5-5h13v14l-5 4H1z" fill="#d5e6fb" />
          <path d="M1 6h13l5-5M14 6v13" />
        </svg>
      </button>
      <Caret className="mt-[7px] text-[#4f5668]" />
      <button type="button" aria-label="全屏" className="mt-[7px] h-5">
        <svg {...svg}>
          <path d="M1 6V1h5M14 1h5v5M19 14v5h-5M6 19H1v-5" />
        </svg>
      </button>
      <button type="button" aria-label="局部三维" className="mt-[9px] h-5">
        <svg {...svg}>
          <rect x="1" y="1" width="18" height="18" strokeDasharray="3 1.500" />
          <path d="M5 8l6-3 6 3v5l-6 4-6-4zM5 8l6 3 6-3" stroke={BLUE} />
        </svg>
      </button>
      <div className="mt-[7px] h-px w-[22px] bg-[#777]" />
      <button type="button" aria-label="显示设置" className="mt-[7px] h-5">
        <svg {...svg}>
          <path d="M9 19H2q-1 0-1-1V2q0-1 1-1h16v9M4 5h1M7 5h8M4 9h1M7 9h6M4 13h1M7 13h3" />
          <path d="M11 16q4-5 8.500 0-4.500 5-8.500 0z" stroke={BLUE} />
          <circle cx="15.300" cy="16" r="1" fill={BLUE} stroke={BLUE} />
        </svg>
      </button>
    </div>
  );
}

const DISPLAY = [
  ["剪力墙水平筋", true],
  ["剪力墙垂直筋", true],
  ["剪力墙插筋", true],
  ["下层墙体纵筋的露出长度", true],
  ["显示其它图元", false],
  ["显示详细公式", false],
];

function Viewport() {
  return (
    <section className="relative h-[382px] shrink-0 overflow-hidden bg-black">
      <Scene />
      <div className="absolute top-px left-0 h-[147px] w-[123px] border border-[#3a78b8] bg-[#1d4f86]" />
      <div className="absolute top-[3px] left-[3px] h-[212px] w-[195px] border border-[#cfcfcf] bg-linear-to-r from-[#e9eef4] via-[#e6e8ea] to-[#e2e2e2] px-[11px] pt-[9px]">
        <h2 className="text-[14px] leading-5">钢筋显示控制面板</h2>
        <div className="mt-[19px] flex h-[151px] flex-col rounded-[3px] border border-[#c6c6c6] bg-white pt-[6px] pl-[10px]">
          {DISPLAY.map(([l, c]) => (
            <Check key={l} label={l} checked={c} className="h-[23px] shrink-0" />
          ))}
        </div>
      </div>
      <ViewTools />
      <button type="button" aria-label="收起侧栏" className="absolute top-[161px] right-0 h-[62px] w-4">
        <svg width="16" height="62" viewBox="0 0 16 62" aria-hidden="true">
          <path d="M16 0L3 4Q0 5 0 8v46q0 3 3 4l13 4z" fill="#484848" />
          <path d="M6 27l4 4-4 4" fill="none" stroke="#aaa" />
        </svg>
      </button>
    </section>
  );
}

/* ---------- rebar editor ---------- */

const COLS = [
  ["", "w-[14px]"],
  ["筋号", "w-[73px]"],
  ["直径(mm)", "w-[56px]"],
  ["级别", "w-[36px]"],
  ["图号", "w-[33px]"],
  ["图形", "w-[216px]"],
  ["计算公式", "w-[166px]"],
  ["公式描述", "w-[61px]"],
  ["弯曲调整", "w-[38px]"],
  ["长度", "w-[39px]"],
  ["根数", "w-[49px]"],
  ["搭接", "w-[61px]"],
  ["损耗(%)", "w-[61px]"],
  ["单重(kg)", "w-[71px]"],
  ["总重(kg)", "w-[69px]"],
];

const ROWS = [
  [["墙身水平钢", "筋.1"], 64, 100, 2420, ["2450-15+10*d-15+10*d"], ["净长-保护", "层+设⋯"], 42, 2578, 36, "1.591", "57.276"],
  [["墙在基础左", "侧水平筋.1"], 64, 100, 2420, ["2450-15+10*d-15+10*d"], ["净长-保护", "层+设⋯"], 42, 2578, 4, "1.591", "6.364"],
  [["墙在基础右", "侧水平筋.1"], 64, 100, 2420, ["2450-15+10*d-15+10*d"], ["净长-保护", "层+设⋯"], 42, 2578, 4, "1.591", "6.364"],
  [["墙身垂直钢", "筋.1"], 18, 100, 3435, ["3450-15+10*d"], ["墙实际高", "度-保⋯"], 21, 3514, 5, "2.168", "10.84"],
  [["墙身垂直钢", "筋.2"], 18, 100, 2623, ["3450-500-1.2*26*d-15+10*d"], ["墙实际高", "度-错⋯"], 21, 2702, 5, "1.667", "8.335"],
  [["墙身左侧插", "筋.1"], 18, 150, 1470, ["31*10+1200-40+15*d"], ["搭接+节点", "高-保⋯"], 21, 1599, 3, "0.987", "2.961"],
  [["墙身左侧插", "筋.2"], 18, 150, 2282, ["31*10+500+1.2*26*d", "+1200-40+15*d"], ["搭接+错开", "长度+⋯"], 21, 2411, 2, "1.488", "2.976"],
  [["墙身右侧插", "筋.1"], 18, 150, 2282, ["31*10+500+1.2*26*d", "+1200-40+15*d"], ["搭接+错开", "长度+⋯"], 21, 2411, 3, "1.488", "4.464"],
];

function Lines({ text }) {
  return text.map((t) => (
    <span key={t} className="block whitespace-nowrap">
      {t}
    </span>
  ));
}

function Grade() {
  return (
    <svg width="9" height="10" viewBox="0 0 9 10" className="mt-[2px] ml-[2px]" fill="none" stroke="#000" role="img" aria-label="三级钢">
      <path d="M4.500 0v9.500M2 2h5l1.500 1.200v2L7 6.500H2L.5 5.200v-2zM3 2v7M6 2v7M1 9h7" strokeWidth=".9" />
    </svg>
  );
}

function Shape({ side, length, closed }) {
  return (
    <div className="flex h-[20px] items-end pr-[2px] pl-[11px] text-[12px] leading-4">
      <span className={closed ? "pb-[2px]" : ""}>{side}</span>
      <div
        className={
          "ml-[3px] flex h-[18px] flex-1 items-start justify-center border-b-2 border-l-2 border-black text-[#ff0000] " +
          (closed ? "mr-[3px] border-r-2" : "mr-[2px]")
        }
      >
        <span className={closed ? "-mt-px" : "-mt-[3px]"}>{length}</span>
      </div>
      {closed && <span className="pb-px">{side}</span>}
    </div>
  );
}

function RebarTable() {
  const cell = "border-r border-b border-[#dcdcdc] pl-[3px] ";
  return (
    <table className="w-full table-fixed border-separate border-spacing-0 text-black">
      <thead>
        <tr className="h-[20px] bg-white text-[#333]">
          {COLS.map(([c, w], i) => (
            <th
              key={i}
              scope="col"
              className={
                "h-[20px] border-r border-b border-[#dcdcdc] p-0 align-top font-normal " +
                w +
                (i === 1 ? " bg-[#83bdfd] font-bold text-white" : "")
              }
            >
              <div className="flex h-[19px] items-center justify-center overflow-hidden leading-[16px]">{c || <span className="sr-only">行号</span>}</div>
            </th>
          ))}
        </tr>
      </thead>
      <tbody className="font-['DejaVu_Sans_Mono','Noto_Sans_CJK_SC',monospace] text-[10px] leading-[14px]">
        {ROWS.map((r, i) => (
          <tr key={i} className="h-[46px] bg-[#c1dedf]">
            <th
              scope="row"
              className={
                "border-r border-b p-0 font-['Noto_Sans',sans-serif] text-[12px] " +
                (i === 0 ? "border-[#6aa9ee] bg-[#83bdfd] font-bold text-white" : "border-[#c4c4c4] bg-[#f0f0f0] font-normal text-[#444]")
              }
            >
              {i + 1}
            </th>
            <td
              className={
                "overflow-hidden pl-[3px] font-['Noto_Sans_CJK_SC',sans-serif] text-[12px] " +
                (i === 0 ? "border-r-2 border-b-2 border-[#7f8585] leading-[17px]" : "border-r border-b border-[#dcdcdc]")
              }
            >
              <Lines text={r[0]} />
            </td>
            <td className={cell}>10</td>
            <td className={cell}>
              <Grade />
            </td>
            <td className={cell}>{r[1]}</td>
            <td className={cell}>
              <Shape side={r[2]} length={r[3]} closed={r[1] === 64} />
            </td>
            <td className={cell + "overflow-hidden"}>
              <Lines text={r[4]} />
            </td>
            <td className={cell + "overflow-hidden font-['Noto_Sans_CJK_SC',sans-serif] text-[12px]"}>
              <Lines text={r[5]} />
            </td>
            <td className={cell}>{r[6]}</td>
            <td className={cell}>{r[7]}</td>
            <td className={cell}>{r[8]}</td>
            <td className={cell}>0</td>
            <td className={cell}>0</td>
            <td className={cell}>{r[9]}</td>
            <td className={cell}>{r[10]}</td>
          </tr>
        ))}
      </tbody>
    </table>
  );
}

function ToolIcon({ label, text, color = INK, className = "", children }) {
  return (
    <button type="button" aria-label={label} className={"flex items-center gap-1 whitespace-nowrap " + className}>
      <svg width="16" height="16" viewBox="0 0 16 16" fill="none" stroke={color} strokeWidth="1.200" className="shrink-0" aria-hidden="true">
        {children}
      </svg>
      {text}
    </button>
  );
}

function Editor() {
  return (
    <section className="mt-1 flex min-h-0 flex-1 flex-col overflow-hidden border border-b-0 border-[#d4d4d4] bg-white">
      <div className="flex h-[28px] shrink-0 items-center bg-[#eeeef0] pr-[7px] pl-[6px]">
        <Grip />
        <h2 className="ml-[13px] flex-1">编辑钢筋</h2>
        <CloseButton label="关闭编辑钢筋" />
      </div>
      <div className="flex h-[28px] shrink-0 items-center border-b border-[#dcdcdc] pl-[5px]">
        <ToolIcon label="首条" color="#b8b8b8">
          <path d="M3 2v12M13 3v10L6.500 8z" />
        </ToolIcon>
        <ToolIcon label="上一条" color="#b8b8b8" className="ml-4">
          <path d="M11 3v10L4.500 8z" />
        </ToolIcon>
        <ToolIcon label="下一条" color={BLUE} className="ml-4">
          <path d="M4 3v10l6.500-5z" />
        </ToolIcon>
        <ToolIcon label="末条" color={BLUE} className="ml-4">
          <path d="M3 3v10l6.500-5zM12.500 2v12" />
        </ToolIcon>
        <ToolIcon label="上移" color="#b8b8b8" className="ml-4">
          <rect x="1" y="1" width="14" height="14" rx="1" />
          <path d="M8 12V4.500M5 7l3-3 3 3" />
        </ToolIcon>
        <ToolIcon label="下移" className="ml-3">
          <rect x="1" y="1" width="14" height="14" rx="1" />
          <path d="M8 4v7.500M5 9l3 3 3-3" stroke={BLUE} />
        </ToolIcon>
        <ToolIcon label="插入" text="插入" className="ml-3">
          <path d="M1 2h10M1 13.500h10M1 5h9v5.500H1z" />
          <path d="M11 7.700h4.500M13.500 5.500l2 2.200-2 2.200" stroke={BLUE} />
        </ToolIcon>
        <ToolIcon label="删除" text="删除" className="ml-3">
          <path d="M1 4h14M5 4V1.500h6V4M3 4v9.500Q3 15 4.500 15h7q1.500 0 1.500-1.500V4" />
          <path d="M6.500 7v5M9.500 7v5" stroke="#e02020" />
        </ToolIcon>
        <ToolIcon label="缩尺配筋" text="缩尺配筋" className="ml-3">
          <path d="M2 1v10M5.500 3v8M8.500 5v6M11.500 6v5M14.500 8v3" />
          <path d="M1 14h14M3 12.500L1 14l2 1.500M13 12.500l2 1.500-2 1.500" stroke={BLUE} />
        </ToolIcon>
        <ToolIcon label="钢筋信息" text="钢筋信息" className="ml-3">
          <path d="M8 14H2.500Q1 14 1 12.500v-10Q1 1 2.500 1h11Q15 1 15 2.500V7M4 4.500h1M7 4.500h6M4 7.500h1M7 7.500h4M4 10.500h1" />
          <path d="M9 11.500h6M12 9v6M9.500 11.500l2.500 3.500 3.500-3.500" stroke={BLUE} />
        </ToolIcon>
        <ToolIcon label="钢筋图库" text="钢筋图库" className="ml-3">
          <rect x="1" y="1" width="14" height="14" rx="1.500" />
          <path d="M3.500 8.500V6h3v2.500M6.500 4v6M8.500 9V4.500M8.500 7q4-2 4 3" />
          <path d="M4 12.500h3M9 12.500h3" stroke={BLUE} />
        </ToolIcon>
        <button type="button" className="ml-3 flex items-center gap-1 whitespace-nowrap">
          其他
          <Caret className="scale-75 text-[#888]" />
        </button>
        <p className="ml-3 whitespace-nowrap">单构件钢筋总重(kg)：103.504</p>
      </div>
      <div className="flex min-h-0 flex-1">
        <div className="min-w-0 flex-1 overflow-hidden">
          <RebarTable />
        </div>
        <div className="mt-3 mr-[4px] ml-[3px] h-[248px] w-1 rounded-full bg-[#e4e4e4]" />
      </div>
      <div className="h-[9px] shrink-0 pt-1 pl-3">
        <div className="h-1 w-[73%] rounded-full bg-[#e8e8e8]" />
      </div>
    </section>
  );
}

/* ---------- display settings ---------- */

const FLOORS = ["首层", "第-1层", "第-2层", "第-3层", "基础层"];
const TREE = [
  { name: "广州黄埔下沙新溪旧村政造...", floors: ["首层", "基础层"], on: "基础层" },
  { name: "地下室人防区域", floors: FLOORS, on: "第-3层", selected: "第-1层" },
  { name: "地下室非人防区域", floors: FLOORS, on: "第-3层" },
  { name: "2#地下室区域", floors: FLOORS, on: "第-3层", off: true },
  { name: "1#塔楼地下室区域", floors: FLOORS, on: "第-3层" },
];

function DisplayPanel() {
  return (
    <aside className="flex w-[208px] shrink-0 flex-col border-t border-l border-[#c8cad0] bg-white">
      <div className="flex h-[29px] shrink-0 items-center bg-[#eeeef0] pr-[6px] pl-[6px]">
        <Grip />
        <h2 className="ml-[12px] flex-1">显示设置</h2>
        <CloseButton label="关闭显示设置" />
      </div>
      <div className="flex h-[26px] shrink-0 items-end border-b border-[#c4c6cc] pl-[2px]" role="tablist">
        <button type="button" role="tab" aria-selected="false" className="h-[21px] w-[62px] rounded-t-[3px] bg-[#dcdcdc] text-[#555]">
          图元显示
        </button>
        <button
          type="button"
          role="tab"
          aria-selected="true"
          className="-mb-px ml-[3px] h-[24px] w-[60px] rounded-t-[3px] border border-b-0 border-[#c4c6cc] bg-white text-[#1a73e8]"
        >
          楼层显示
        </button>
      </div>
      <div className="flex h-[29px] shrink-0 items-center gap-[7px] overflow-hidden pl-[7px] text-black">
        {["当前楼层", "相邻楼层", "全部楼层"].map((r, i) => (
          <label key={r} className="flex shrink-0 items-center gap-[7px]">
            <input
              type="radio"
              name="scope"
              defaultChecked={i === 0}
              className="size-[14px] shrink-0 appearance-none rounded-full border border-[#888] bg-white checked:border-[#777] checked:bg-[#2b7de1] checked:shadow-[inset_0_0_0_3px_#fff]"
            />
            <span className="w-[39px] overflow-hidden whitespace-nowrap">{r}</span>
          </label>
        ))}
      </div>
      <ul className="min-h-0 flex-1 overflow-hidden border border-[#c4c6cc] pt-[3px]">
        {TREE.map((t) => (
          <li key={t.name} className={t.off ? "text-[#888]" : ""}>
            <div className="flex h-6 items-center pl-[10px]">
              <Caret className="mr-[7px] text-[#888]" />
              <Check label={t.name} partial disabled={t.off} gap="gap-[7px]" />
            </div>
            <ul>
              {t.floors.map((f) => (
                <li key={f} className="flex h-6 items-center pl-10">
                  <Check
                    label={f}
                    checked={f === t.on}
                    disabled={t.off}
                    gap="gap-[7px]"
                    className={"h-[21px] flex-1 pl-[4px] " + (f === t.selected ? "bg-[#c2d9f1]" : "")}
                  />
                </li>
              ))}
            </ul>
          </li>
        ))}
      </ul>
      <div className="flex h-[35px] shrink-0 items-center pt-[3px] pl-px">
        <Check label="其他区域图元亮显" />
      </div>
    </aside>
  );
}

/* ---------- page ---------- */

export default function App() {
  return (
    <div className="relative flex h-screen flex-col overflow-hidden bg-[#fbfbfb] font-['Noto_Sans','Noto_Sans_CJK_SC',sans-serif] text-[12px] leading-4 text-[#333]">
      <TopBar />
      <Ribbon />
      <SelectBar />
      <main className="flex min-h-0 flex-1">
        <NavPanel />
        <div className="ml-1 flex w-[443px] shrink-0 flex-col">
          <ListPanel />
          <PropertyPanel />
        </div>
        <div className="mr-1 ml-1 flex min-w-0 flex-1 flex-col">
          <Viewport />
          <Editor />
        </div>
        <DisplayPanel />
      </main>

      <svg className="pointer-events-none absolute top-[325px] left-[790px]" width="560" height="335" viewBox="790 325 560 335" aria-hidden="true">
        <defs>
          <linearGradient id="fade" gradientUnits="userSpaceOnUse" x1="793" y1="656" x2="870" y2="610">
            <stop offset="0" stopColor="#ff1e10" stopOpacity=".4" />
            <stop offset="1" stopColor="#ff1e10" />
          </linearGradient>
        </defs>
        <path d="M793 656L1333 336.500 1329 331.500 1347 333 1338 346 1336 341.500z" fill="url(#fade)" />
      </svg>

      <div className="pointer-events-none absolute right-[90px] bottom-[15px] whitespace-nowrap text-[#949494]/75">
        <p className="text-[20px] leading-7">激活 Windows</p>
        <p className="text-[15px] leading-5">转到“设置”以激活 Windows。</p>
      </div>
    </div>
  );
}
